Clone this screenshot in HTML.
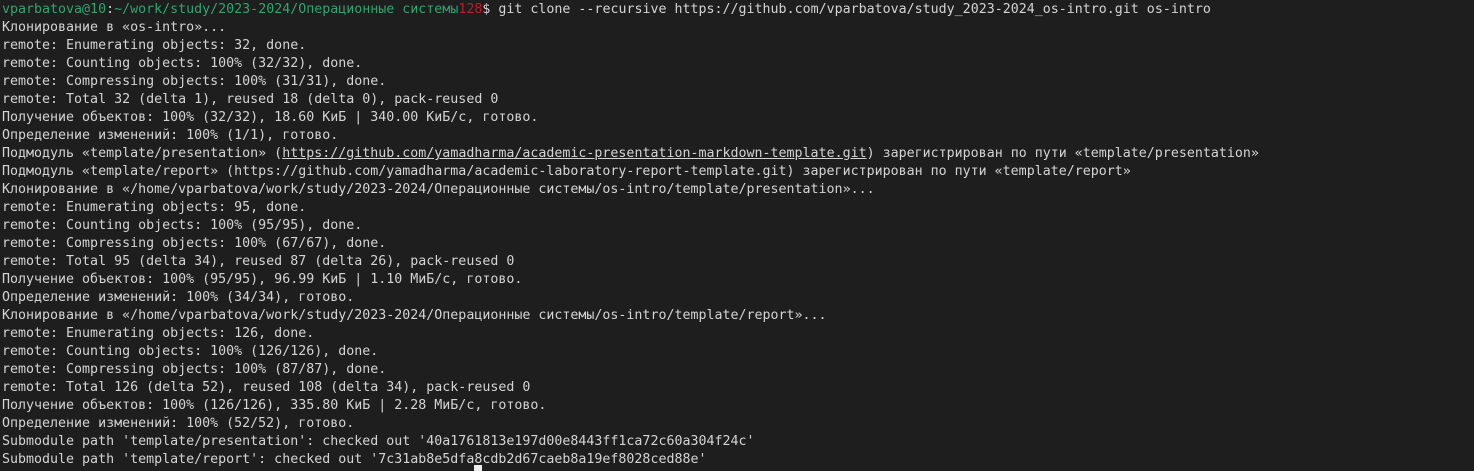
<!DOCTYPE html><html><head><meta charset="utf-8"><style>
html,body{margin:0;padding:0;background:#1e1e1e;width:1474px;height:471px;overflow:hidden}
pre{margin:0;padding:1px 0 0 2px;font-family:"DejaVu Sans Mono","Liberation Mono",monospace;font-size:13.3px;line-height:18px;color:#d4d4d4;white-space:pre}
.g{color:#2fa56c}.r{color:#c01c28}u{text-decoration:underline}
.cur{position:absolute;left:474px;top:465px;width:8px;height:6px;background:#eee}
</style></head><body><pre><span class="g">vparbatova@10</span>:<span class="g">~/work/study/2023-2024/Операционные системы</span><span class="r">128</span>$ git clone --recursive https://github.com/vparbatova/study_2023-2024_os-intro.git os-intro
Клонирование в «os-intro»...
remote: Enumerating objects: 32, done.
remote: Counting objects: 100% (32/32), done.
remote: Compressing objects: 100% (31/31), done.
remote: Total 32 (delta 1), reused 18 (delta 0), pack-reused 0
Получение объектов: 100% (32/32), 18.60 КиБ | 340.00 КиБ/с, готово.
Определение изменений: 100% (1/1), готово.
Подмодуль «template/presentation» (<u>https://github.com/yamadharma/academic-presentation-markdown-template.git</u>) зарегистрирован по пути «template/presentation»
Подмодуль «template/report» (https://github.com/yamadharma/academic-laboratory-report-template.git) зарегистрирован по пути «template/report»
Клонирование в «/home/vparbatova/work/study/2023-2024/Операционные системы/os-intro/template/presentation»...
remote: Enumerating objects: 95, done.
remote: Counting objects: 100% (95/95), done.
remote: Compressing objects: 100% (67/67), done.
remote: Total 95 (delta 34), reused 87 (delta 26), pack-reused 0
Получение объектов: 100% (95/95), 96.99 КиБ | 1.10 МиБ/с, готово.
Определение изменений: 100% (34/34), готово.
Клонирование в «/home/vparbatova/work/study/2023-2024/Операционные системы/os-intro/template/report»...
remote: Enumerating objects: 126, done.
remote: Counting objects: 100% (126/126), done.
remote: Compressing objects: 100% (87/87), done.
remote: Total 126 (delta 52), reused 108 (delta 34), pack-reused 0
Получение объектов: 100% (126/126), 335.80 КиБ | 2.28 МиБ/с, готово.
Определение изменений: 100% (52/52), готово.
Submodule path 'template/presentation': checked out '40a1761813e197d00e8443ff1ca72c60a304f24c'
Submodule path 'template/report': checked out '7c31ab8e5dfa8cdb2d67caeb8a19ef8028ced88e'</pre><div class="cur"></div></body></html>
